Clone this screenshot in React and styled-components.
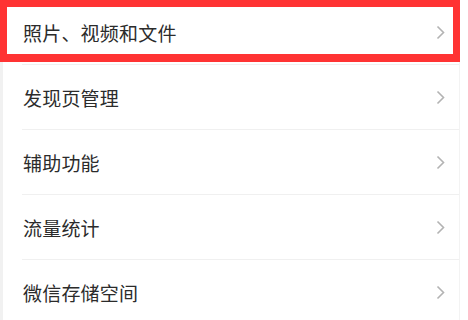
import React from 'react';
import styled, { createGlobalStyle } from 'styled-components';

const GlobalStyle = createGlobalStyle`
  html, body {
    margin: 0;
    padding: 0;
    background: #ffffff;
  }
  body {
    font-family: "Noto Sans CJK SC", "Liberation Sans", sans-serif;
  }
`;

const items = ['照片、视频和文件', '发现页管理', '辅助功能', '流量统计', '微信存储空间'];

const Page = styled.div`
  width: 468px;
  height: 320px;
  overflow: hidden;
  background: #ffffff;
  display: flex;
`;

const List = styled.ul`
  list-style: none;
  margin: 0;
  padding: 0;
  width: 460px;
  border-left: 3px solid #f1f1f1;
  border-right: 1px solid #f3f3f3;
  box-sizing: border-box;
`;

const Row = styled.li`
  position: relative;
  height: 65px;
  box-sizing: border-box;
  margin-left: 19px;
  padding: 1px 14px 0 1px;
  display: flex;
  align-items: center;
  justify-content: space-between;
  border-bottom: 1px solid #f0f0f0;

  &::after {
    content: '';
    display: ${(p) => (p.$highlight ? 'block' : 'none')};
    position: absolute;
    left: -22px;
    top: 0;
    width: 460px;
    height: 62px;
    box-sizing: border-box;
    border: 7px solid #ff3333;
    border-bottom-width: 8px;
  }
`;

const Label = styled.span`
  font-size: 19px;
  color: #2b2b2b;
  letter-spacing: 0.2px;
`;

const Chevron = styled.svg`
  width: 9px;
  height: 15px;
  margin-top: -1px;
`;

const Arrow = () => (
  <Chevron viewBox="0 0 9 15">
    <path d="M1.5 1.5 L7.5 7.5 L1.5 13.5" fill="none" stroke="#b3b3b3" strokeWidth="1.6" />
  </Chevron>
);

const App = () => (
  <Page>
    <GlobalStyle />
    <List>
      {items.map((text, i) => (
        <Row key={text} $highlight={i === 0}>
          <Label>{text}</Label>
          <Arrow />
        </Row>
      ))}
    </List>
  </Page>
);

export default App;
